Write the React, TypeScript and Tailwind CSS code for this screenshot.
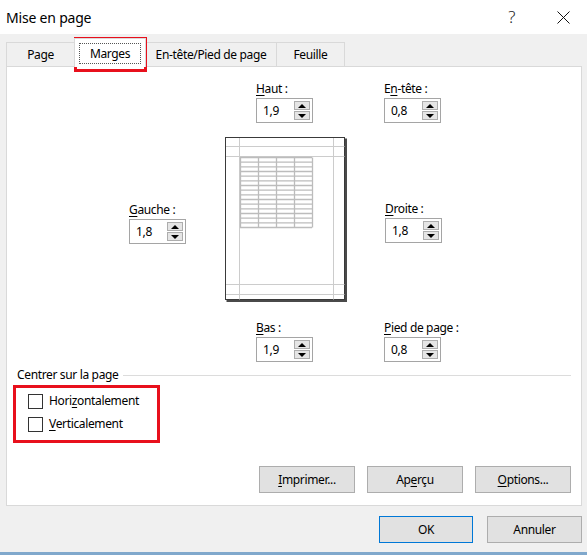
import React from 'react';

const U = ({ children }: { children: React.ReactNode }) => (
  <span className="underline underline-offset-[1.5px]">{children}</span>
);

function Spin({ value }: { value: string }) {
  return (
    <div className="flex h-[25px] w-[57px] items-center border border-[#a5a5a5] bg-white pl-[6px]">
      <span className="flex-1 text-[12px] leading-none">{value}</span>
      <div className="mr-[2px] flex flex-col gap-[1px]">
        <div className="flex h-[9px] w-[16px] items-center justify-center border border-[#adadad] bg-[#e5e5e5]">
          <div className="h-0 w-0 border-x-[4px] border-b-[4px] border-x-transparent border-b-black" />
        </div>
        <div className="flex h-[9px] w-[16px] items-center justify-center border border-[#adadad] bg-[#e5e5e5]">
          <div className="h-0 w-0 border-x-[4px] border-t-[4px] border-x-transparent border-t-black" />
        </div>
      </div>
    </div>
  );
}

function Field({ label, value }: { label: React.ReactNode; value: string }) {
  return (
    <div className="flex w-[57px] flex-col">
      <div className="mb-[1px] h-[16px] whitespace-nowrap text-[12px] leading-[16px]">{label}</div>
      <Spin value={value} />
    </div>
  );
}

function PagePreview() {
  const rows = 15;
  const rowH = 70 / rows;
  return (
    <svg width="122" height="165" viewBox="0 0 122 165">
      <rect x="0.5" y="0.5" width="119" height="162" fill="#fff" stroke="#3a3a3a" />
      <rect x="120" y="1.5" width="2" height="163" fill="#4a4a4a" />
      <rect x="1.5" y="163" width="120.5" height="2" fill="#4a4a4a" />
      <g stroke="#cccccc" strokeWidth="1">
        <line x1="14.5" y1="1" x2="14.5" y2="162.5" />
        <line x1="108.5" y1="1" x2="108.5" y2="162.5" />
        <line x1="1" y1="9.5" x2="119.5" y2="9.5" />
        <line x1="1" y1="19.5" x2="119.5" y2="19.5" />
        <line x1="1" y1="147.5" x2="119.5" y2="147.5" />
        <line x1="1" y1="157.5" x2="119.5" y2="157.5" />
      </g>
      <g stroke="#bcbcbc" strokeWidth="1.3">
        {Array.from({ length: rows + 1 }).map((_, i) => (
          <line key={'r' + i} x1="15" y1={20.5 + i * rowH} x2="87" y2={20.5 + i * rowH} />
        ))}
        {[0, 1, 2, 3, 4].map((i) => (
          <line key={'c' + i} x1={15.5 + i * 18} y1="20.5" x2={15.5 + i * 18} y2="90.5" />
        ))}
      </g>
    </svg>
  );
}

function Btn({ children, className = '' }: { children: React.ReactNode; className?: string }) {
  return (
    <div
      className={`flex h-[27px] items-center justify-center border bg-[#e1e1e1] text-[12px] ${className}`}
    >
      {children}
    </div>
  );
}

export default function App() {
  return (
    <div
      className="relative flex h-[555px] w-[587px] flex-col overflow-hidden bg-[#f0f0f0] tracking-[-0.35px] text-black"
      style={{ fontFamily: '"Noto Sans", "Open Sans", sans-serif' }}
    >
      {/* title bar */}
      <div className="flex h-[34px] items-center bg-white pl-[6px]">
        <span className="text-[14px] tracking-[-0.2px]">Mise en page</span>
        <span className="ml-auto mr-[42px] text-[17px] font-light text-[#222]">?</span>
        <svg width="13" height="13" viewBox="0 0 13 13" className="mr-[17px]">
          <path d="M0.5 0.5 L12.5 12.5 M12.5 0.5 L0.5 12.5" stroke="#111" strokeWidth="1" />
        </svg>
      </div>

      {/* tabs */}
      <div className="flex h-[32px] items-end pl-[6px] text-[12px]">
        <div className="flex h-[24px] w-[68px] items-center justify-center border-l border-t border-[#d9d9d9] pt-[1px]">
          Page
        </div>
        <div className="relative z-10 -mb-px flex h-[29px] w-[72px] items-start justify-center border-x border-t border-[#d9d9d9] bg-white pt-[4px]">
          <div className="flex h-[21px] w-[62px] items-center justify-center border border-dotted border-[#555]">
            Marges
          </div>
        </div>
        <div className="flex h-[24px] w-[131px] items-center justify-center border-r border-t border-[#d9d9d9] pt-[1px]">
          En-tête/Pied de page
        </div>
        <div className="flex h-[24px] w-[68px] items-center justify-center border-r border-t border-[#d9d9d9] pt-[1px]">
          Feuille
        </div>
      </div>

      {/* panel */}
      <div className="ml-[6px] flex h-[440px] w-[576px] flex-col border border-[#d9d9d9] bg-white pt-[14px]">
        <div className="flex pl-[249px]">
          <Field label={<><U>H</U>aut :</>} value="1,9" />
          <div className="ml-[71px]">
            <Field label={<>E<U>n</U>-tête :</>} value="0,8" />
          </div>
        </div>

        <div className="mt-[14px] flex">
          <div className="w-[218px] pl-[122px] pt-[65px]">
            <Field label={<><U>G</U>auche :</>} value="1,8" />
          </div>
          <PagePreview />
          <div className="pl-[38px] pt-[64px]">
            <Field label={<><U>D</U>roite :</>} value="1,8" />
          </div>
        </div>

        <div className="mt-[18px] flex pl-[249px]">
          <Field label={<><U>B</U>as :</>} value="1,9" />
          <div className="ml-[71px]">
            <Field label={<><U>P</U>ied de page :</>} value="0,8" />
          </div>
        </div>

        <div className="mt-[5px] flex h-[16px] items-center pl-[10px] pr-[10px] text-[12px]">
          <span>Centrer sur la page</span>
          <div className="ml-[5px] h-px flex-1 bg-[#dcdcdc]" />
        </div>

        <div className="mt-[8px] flex h-[20px] items-center pl-[21px] text-[12px]">
          <div className="mr-[6px] h-[15px] w-[15px] border border-[#333] bg-white" />
          <span>
            Hori<U>z</U>ontalement
          </span>
        </div>
        <div className="mt-[3px] flex h-[20px] items-center pl-[21px] text-[12px]">
          <div className="mr-[6px] h-[15px] w-[15px] border border-[#333] bg-white" />
          <span>
            <U>V</U>erticalement
          </span>
        </div>

        <div className="mt-[32px] flex justify-end gap-[12px] pr-[10px]">
          <Btn className="w-[96px] border-[#adadad]">
            <span><U>I</U>mprimer...</span>
          </Btn>
          <Btn className="w-[96px] border-[#adadad]">
            <span>Ap<U>e</U>rçu</span>
          </Btn>
          <Btn className="w-[96px] border-[#adadad]">
            <span><U>O</U>ptions...</span>
          </Btn>
        </div>
      </div>

      {/* dialog buttons */}
      <div className="mt-[10px] flex justify-end gap-[14px] pr-[5px]">
        <Btn className="w-[94px] border-[#0078d7]">OK</Btn>
        <Btn className="w-[95px] border-[#adadad]">Annuler</Btn>
      </div>

      <div className="mt-auto h-[3px] bg-[#80a8cc]" />

      {/* red highlight boxes */}
      <div className="pointer-events-none absolute left-[74px] top-[37px] h-[35px] w-[73px] border-[3px] border-[#e8101c]" />
      <div className="pointer-events-none absolute left-[13px] top-[385px] h-[58px] w-[147px] border-[3px] border-[#e8101c]" />
    </div>
  );
}
